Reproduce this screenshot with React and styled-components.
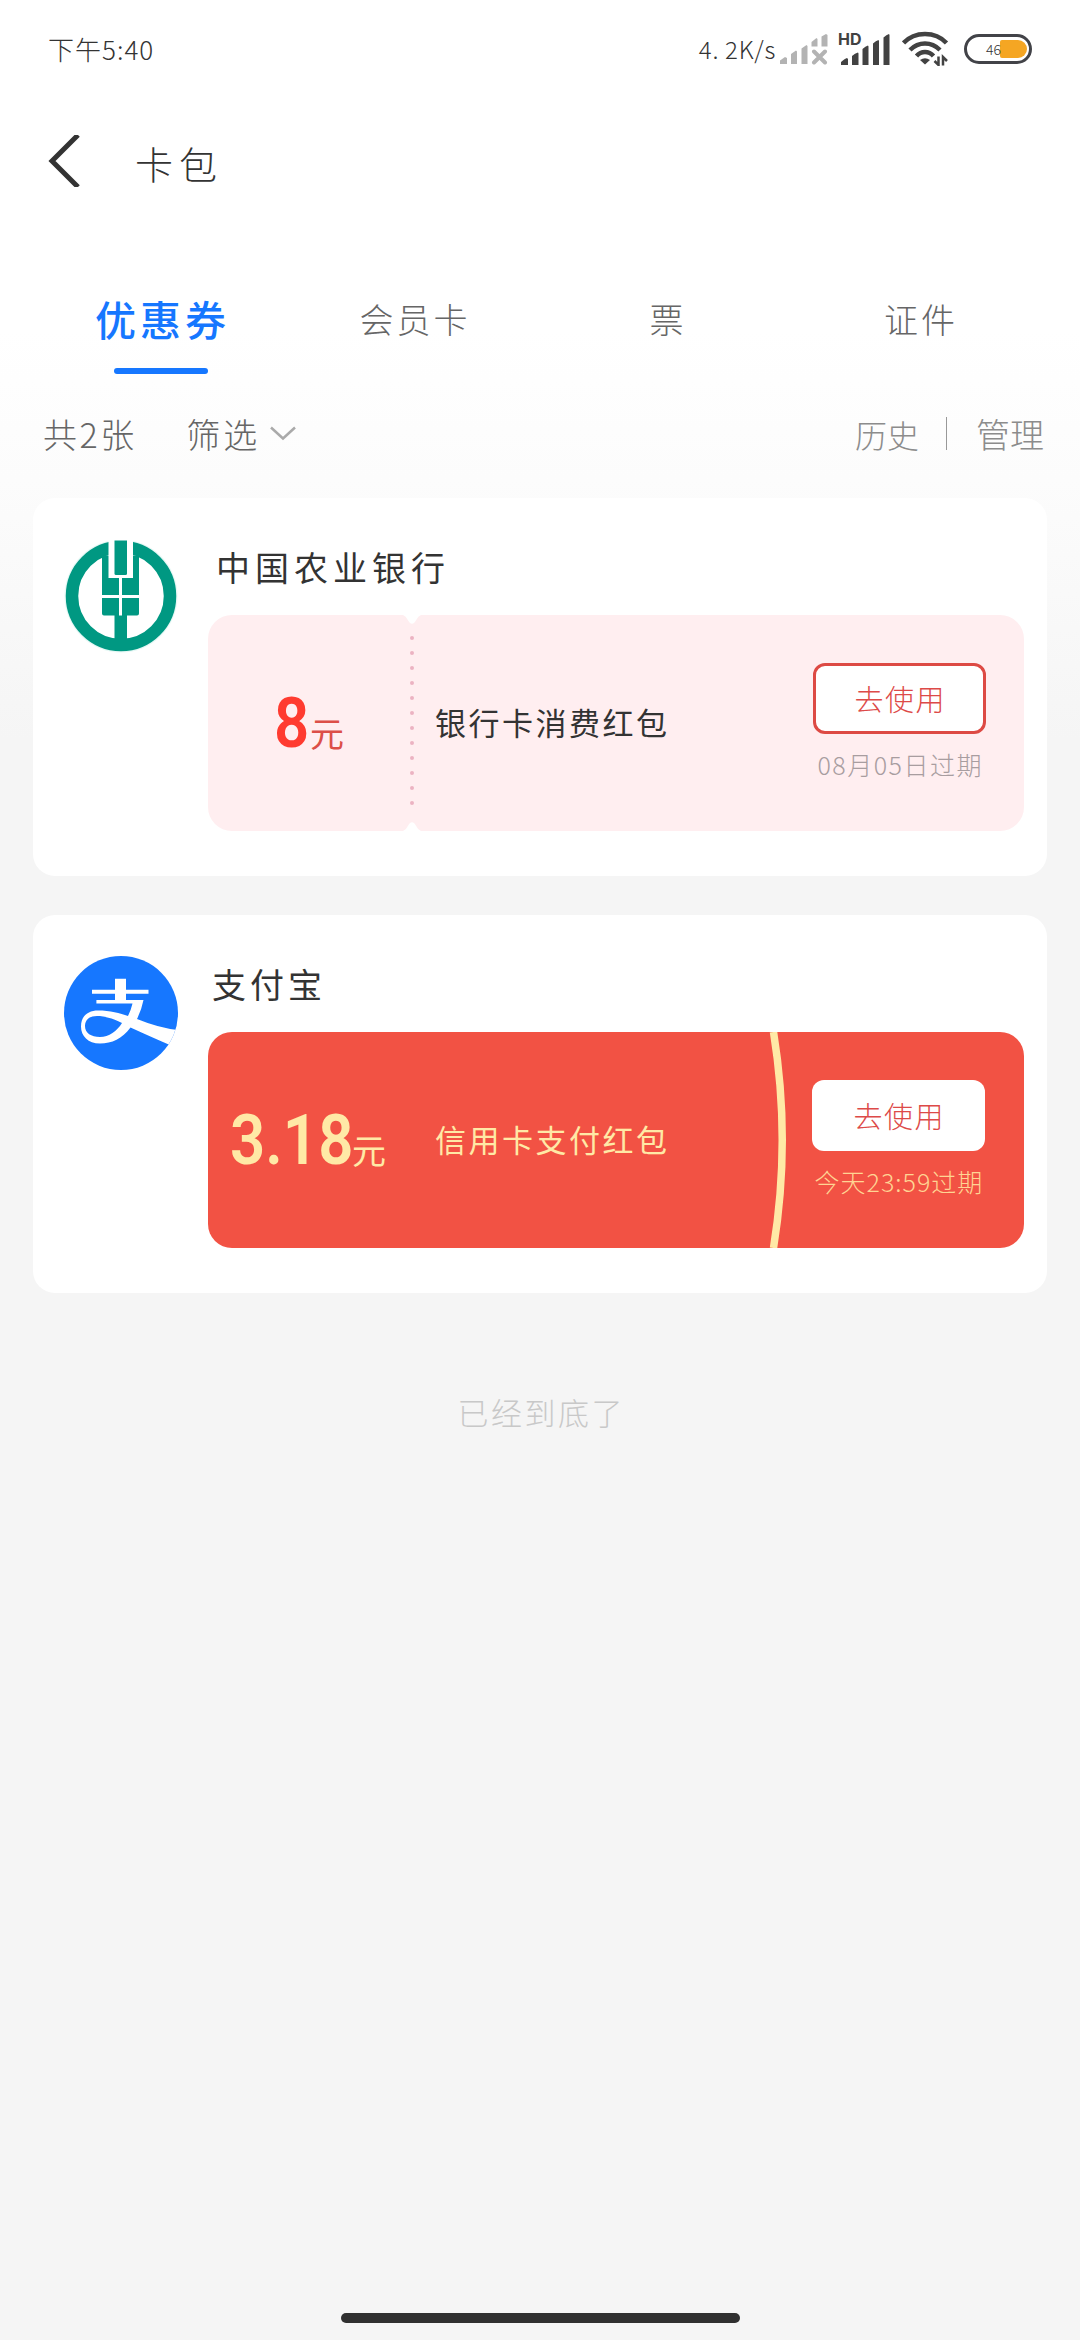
import React from 'react';
import styled, { createGlobalStyle } from 'styled-components';

const GlobalStyle = createGlobalStyle`
  * {
    box-sizing: border-box;
  }
  body {
    margin: 0;
    font-family: 'Noto Sans CJK SC', sans-serif;
    font-weight: 300;
    color: #333;
    background: #f5f5f5;
  }
`;

const Page = styled.div`
  display: flex;
  flex-direction: column;
  width: 1080px;
  height: 2340px;
  overflow: hidden;
  background: linear-gradient(#fff 330px, #fcfcfc 480px, #f5f5f5 740px);
`;

const Text = styled.span`
  font-size: ${({ $size }) => $size}px;
  letter-spacing: ${({ $gap = 0 }) => $gap}px;
  margin-right: ${({ $gap = 0 }) => -$gap}px;
  line-height: 1;
  white-space: nowrap;
`;

const StatusBar = styled.div`
  display: flex;
  align-items: center;
  height: 97px;
  padding: 0 48px;
`;

const Time = styled(Text)`
  flex: 1;
  margin-right: 0;
`;

const StatusIcons = styled.div`
  display: flex;
  align-items: center;

  svg {
    display: block;
  }
`;

const Speed = styled(Text)`
  margin-right: 4px;
`;

const HdSignal = styled.div`
  position: relative;
  margin: 0 12px 0 11px;
`;

const HdLabel = styled.span`
  position: absolute;
  left: -1px;
  top: -3px;
  font-family: Inter, sans-serif;
  font-size: 16px;
  font-weight: 700;
  line-height: 20px;
  color: #424242;
`;

const Battery = styled.div`
  display: flex;
  align-items: center;
  justify-content: flex-end;
  position: relative;
  width: 68px;
  height: 30px;
  margin-left: 15px;
  padding-right: 2px;
  border: 3px solid #424348;
  border-radius: 15px;
`;

const BatteryLevel = styled.div`
  width: 27px;
  height: 18px;
  border-radius: 2px 9px 9px 2px;
  background: #f5a623;
`;

const BatteryText = styled.span`
  position: absolute;
  left: 19px;
  top: 5px;
  font-size: 14px;
  line-height: 14px;
`;

const Header = styled.header`
  display: flex;
  align-items: center;
  gap: 54px;
  height: 131px;
  padding: 0 0 3px 48px;
`;

const Title = styled(Text)`
  margin-top: 3px;
`;

const Tabs = styled.nav`
  display: grid;
  grid-template-columns: repeat(4, 253px);
  justify-content: center;
  height: 146px;
  padding-top: 63px;
`;

const Tab = styled.div`
  display: flex;
  flex-direction: column;
  align-items: center;
  gap: 22px;
  color: ${({ $active }) => ($active ? '#1677ff' : '#666')};
  font-weight: ${({ $active }) => ($active ? 500 : 300)};
`;

const TabLabel = styled.div`
  display: flex;
  align-items: center;
  height: 55px;
`;

const TabLine = styled.div`
  width: 94px;
  height: 6px;
  border-radius: 3px;
  background: #1677ff;
`;

const FilterBar = styled.div`
  display: flex;
  align-items: center;
  height: 124px;
  padding: 0 36px 5px 43px;
  color: #666;
`;

const Filter = styled.div`
  display: flex;
  align-items: center;
  gap: 13px;
  flex: 1;
  margin-left: 52px;
`;

const FilterActions = styled.div`
  display: flex;
  align-items: center;
  color: #8c8c8c;
`;

const Divider = styled.div`
  width: 1px;
  height: 33px;
  margin: 0 29px 0 27px;
  background: #999;
`;

const CardList = styled.main`
  display: flex;
  flex-direction: column;
  gap: 39px;
  padding: 0 33px;
`;

const Card = styled.section`
  display: flex;
  gap: 30px;
  height: 378px;
  padding: 41px 23px 0 31px;
  border-radius: 22px;
  background: #fff;
`;

const CardBody = styled.div`
  flex: 1;
`;

const CardName = styled.div`
  display: flex;
  align-items: center;
  height: 56px;
  margin-bottom: 20px;
  padding-left: ${({ $indent }) => $indent}px;
  font-weight: 400;
`;

const Coupon = styled.div`
  display: flex;
  position: relative;
  width: 816px;
  height: 216px;
  border-radius: 24px;
  overflow: hidden;
  color: ${({ $red }) => ($red ? '#ffe9a6' : '#333')};
  background: ${({ $red }) => ($red ? '#f25244' : '#ffeef0')};
`;

const Decoration = styled.svg`
  position: absolute;
  top: 0;
  left: ${({ $left }) => $left}px;
`;

const Price = styled.div`
  display: flex;
  align-items: flex-start;
  justify-content: center;
  width: 204px;
  height: 216px;
  padding-right: ${({ $shift = 0 }) => $shift}px;
`;

const Amount = styled.span`
  display: inline-block;
  width: ${({ $width }) => $width}px;
  margin-top: 66px;
  transform: scaleX(0.87);
  transform-origin: left;
  font-family: Roboto, sans-serif;
  font-size: 71px;
  font-weight: 600;
  line-height: 84px;
  color: ${({ $red }) => ($red ? '#ffe9a6' : '#ff3b30')};
`;

const Unit = styled.span`
  margin-top: 98px;
  font-size: 34px;
  font-weight: 400;
  line-height: 40px;
  color: ${({ $red }) => ($red ? '#ffe9a6' : '#dc4f48')};
`;

const CouponTitle = styled.div`
  display: flex;
  align-items: center;
  flex: 1;
  padding: 0 0 3px 23px;
  font-weight: 400;
`;

const CouponAction = styled.div`
  display: flex;
  flex-direction: column;
  align-items: center;
  gap: 18px;
  width: 173px;
  margin-right: ${({ $red }) => ($red ? 39 : 38)}px;
  padding-top: 48px;
  color: ${({ $red }) => ($red ? '#ffd493' : '#a89da0')};
`;

const UseButton = styled.button`
  display: flex;
  align-items: center;
  justify-content: center;
  width: 173px;
  height: 71px;
  padding: 0;
  border: ${({ $outlined }) => ($outlined ? '3px solid #dd4a44' : 'none')};
  border-radius: 12px;
  background: #fff;
  color: #dd4a48;
  font-family: inherit;
  font-weight: 300;
`;

const EndTip = styled.div`
  display: flex;
  justify-content: center;
  flex: 1;
  padding-top: 103px;
  color: #c8c8c8;
`;

const HomeBar = styled.div`
  width: 399px;
  height: 10px;
  margin: 0 auto 17px;
  border-radius: 5px;
  background: #303030;
`;

const SignalOff = () => (
  <svg width="48" height="32" viewBox="0 0 48 32" fill="#b3b3b3">
    <path d="M0 31v-3.500l5-3.500 2 1v6zM11 31V21l5-3.500 1 1V31zM21.500 31V15.500l5-3.500 1 1V31zM31.500 13.500V9l5-4 1 1v7.500zM41.500 13.500V3.500L46 1l1.500 1v11.500z" />
    <path d="M34 18.500l11 11M45 18.500l-11 11" stroke="#b3b3b3" strokeWidth="4" strokeLinecap="round" />
  </svg>
);

const Signal = () => (
  <svg width="51" height="34" viewBox="0 0 51 34" fill="#424242">
    <path d="M2 33v-3q4-3.500 6-4l1 1v6zM13 33V24q3-3 6-3.500l.5 1V33zM23.500 33V17q3-3 5.500-3.500l.5 1V33zM34 33V11.500q3-3 5.500-3.500l.5 1V33zM44.500 33V5.500q3-3 5.500-3.500l.5 1V33z" />
  </svg>
);

const Wifi = () => (
  <svg width="47" height="35" viewBox="0 0 47 35" fill="none" stroke="#424242" strokeWidth="4.500">
    <path d="M1.500 12Q10 3 23 3t21.500 9M8 19q6.500-6.500 15-6.500T38 19M14.500 25q3.500-4 8.500-4t8.500 4" />
    <path d="M18 29q5-3.500 10 0l-5 4.500z" fill="#424242" stroke="none" />
    <path d="M36.500 25.500V34l-4-4M41 34.500V26l4 4" strokeWidth="2.500" />
  </svg>
);

const BackArrow = () => (
  <svg width="33" height="52" viewBox="0 0 33 52">
    <path d="M30 0L4 26L30 52" fill="none" stroke="#333" strokeWidth="5" />
  </svg>
);

const Chevron = () => (
  <svg width="26" height="15" viewBox="0 0 26 15">
    <path d="M1 1.500L13 12.500L25 1.500" fill="none" stroke="#aaa" strokeWidth="2.500" />
  </svg>
);

const BankLogo = () => (
  <svg width="114" height="114" viewBox="-2 -1.500 114 114">
    <circle cx="55" cy="55.500" r="56.500" fill="#e6f8f5" />
    <circle cx="55" cy="55.500" r="49" fill="#fff" stroke="#009882" strokeWidth="12.500" />
    <path d="M36 15H73V73q0 2-2 2H61V100H48.500V75H38q-2 0-2-2z" fill="#009882" />
    <path d="M42.500 -2H67V37.500H42.500z" fill="#fff" />
    <path d="M48.500 0H61V33q0 1.500-1.500 1.500H50q-1.500 0-1.500-1.500z" fill="#009882" />
    <path d="M54.500 37V75M36 56H73" stroke="#fff" strokeWidth="3" />
  </svg>
);

const AlipayLogo = () => (
  <svg width="114" height="114" viewBox="0 0 114 114">
    <clipPath id="round">
      <circle cx="57" cy="57" r="57" />
    </clipPath>
    <g clipPath="url(#round)">
      <rect width="114" height="114" fill="#1677ff" />
      <path d="M51 22.700H62V45H51zM28 33.700H84.500V37.700H28z" fill="#fff" />
      <path
        d="M32.400 44H79.500Q77.500 54 73 63Q95 72 114 74L107 89.500Q85 80 66.500 71.500C58 83 48 87.500 36 87.500C24 87.500 17 80 17 70.500C17 60 24 54.500 34 54.500C46 54.500 56 57 64 60Q67 54 68.500 47.500H32.400ZM58 67C48 62 40 60 33 60C25 60 21 64 21 70C21 77 27 81 36 81C45 81 53 75 58 67Z"
        fill="#fff"
        fillRule="evenodd"
      />
    </g>
  </svg>
);

// perforation between the amount and the title
const Perforation = () => (
  <Decoration $left={195} width="18" height="216" viewBox="0 0 18 216">
    <path d="M0 0H18Q15 1 13.500 4.500Q9 13 4.500 4.500Q3 1 0 0zM0 216H18Q15 215 13.500 211.500Q9 203 4.500 211.500Q3 215 0 216z" fill="#fff" />
    <path d="M9 23V203" stroke="#ecb3c2" strokeWidth="4" strokeLinecap="round" strokeDasharray="0 15" />
  </Decoration>
);

const GoldCurve = () => (
  <Decoration $left={552} width="40" height="216" viewBox="0 0 40 216">
    <path d="M13.500 0Q31 108 13.500 216" fill="none" stroke="#ffe9a6" strokeWidth="7.500" />
  </Decoration>
);

const tabs = ['优惠券', '会员卡', '票', '证件'];

const App = () => {
  return (
    <Page>
      <GlobalStyle />
      <StatusBar>
        <Time $size={26} $gap={1}>下午5:40</Time>
        <StatusIcons>
          <Speed $size={24} $gap={0.7}>4. 2K/s</Speed>
          <SignalOff />
          <HdSignal>
            <Signal />
            <HdLabel>HD</HdLabel>
          </HdSignal>
          <Wifi />
          <Battery>
            <BatteryLevel />
            <BatteryText>46</BatteryText>
          </Battery>
        </StatusIcons>
      </StatusBar>

      <Header>
        <BackArrow />
        <Title $size={38} $gap={6}>卡包</Title>
      </Header>

      <Tabs>
        {tabs.map((tab, index) => (
          <Tab key={tab} $active={index === 0}>
            <TabLabel>
              <Text $size={index === 0 ? 41 : 34} $gap={index === 0 ? 4 : 3}>{tab}</Text>
            </TabLabel>
            {index === 0 && <TabLine />}
          </Tab>
        ))}
      </Tabs>

      <FilterBar>
        <Text $size={34} $gap={2.5}>共2张</Text>
        <Filter>
          <Text $size={34} $gap={3}>筛选</Text>
          <Chevron />
        </Filter>
        <FilterActions>
          <Text $size={32}>历史</Text>
          <Divider />
          <Text $size={34}>管理</Text>
        </FilterActions>
      </FilterBar>

      <CardList>
        <Card>
          <BankLogo />
          <CardBody>
            <CardName $indent={8}>
              <Text $size={34} $gap={5}>中国农业银行</Text>
            </CardName>
            <Coupon>
              <Perforation />
              <Price $shift={2}>
                <Amount $width={36}>8</Amount>
                <Unit>元</Unit>
              </Price>
              <CouponTitle>
                <Text $size={31} $gap={2.5}>银行卡消费红包</Text>
              </CouponTitle>
              <CouponAction>
                <UseButton $outlined>
                  <Text $size={29} $gap={1.5}>去使用</Text>
                </UseButton>
                <Text $size={25} $gap={1.5}>08月05日过期</Text>
              </CouponAction>
            </Coupon>
          </CardBody>
        </Card>

        <Card>
          <AlipayLogo />
          <CardBody>
            <CardName $indent={4}>
              <Text $size={34} $gap={4}>支付宝</Text>
            </CardName>
            <Coupon $red>
              <GoldCurve />
              <Price $shift={4}>
                <Amount $red $width={122}>3.18</Amount>
                <Unit $red>元</Unit>
              </Price>
              <CouponTitle>
                <Text $size={31} $gap={2.5}>信用卡支付红包</Text>
              </CouponTitle>
              <CouponAction $red>
                <UseButton>
                  <Text $size={29} $gap={1.5}>去使用</Text>
                </UseButton>
                <Text $size={25} $gap={1}>今天23:59过期</Text>
              </CouponAction>
            </Coupon>
          </CardBody>
        </Card>
      </CardList>

      <EndTip>
        <Text $size={31} $gap={2.5}>已经到底了</Text>
      </EndTip>
      <HomeBar />
    </Page>
  );
};

export default App;
